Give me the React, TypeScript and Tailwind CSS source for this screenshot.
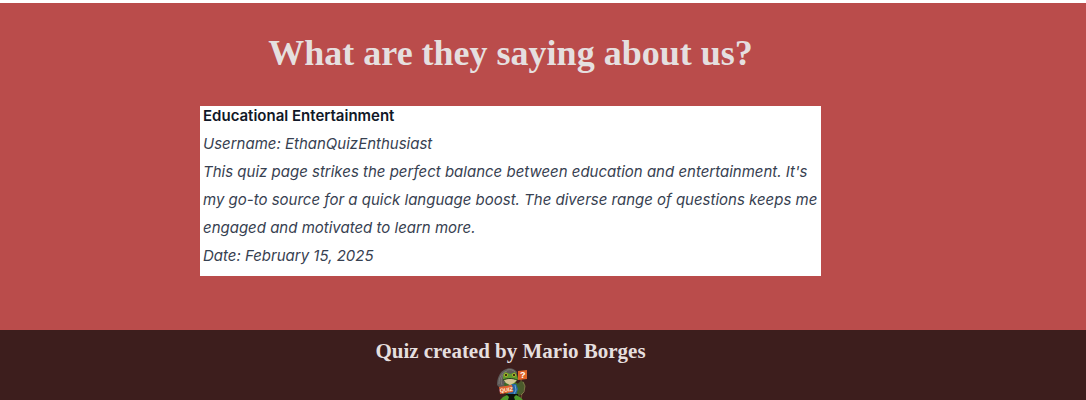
function FrogLogo() {
  return (
    <svg viewBox="0 0 32 32" className="block h-8 w-8" role="img" aria-label="Quiz frog mascot">
      <path d="M2 17C2 11 4 5 9 2c5-3 10-2 13 2l-2 12-5 5H6z" fill="#5d5a58" />
      <path d="M4 16C4 10 6 5 12 3M7 17C5 12 7 7 10 5M12 2c4-1 6 0 8 2" fill="none" stroke="#85817d" strokeWidth="0.8" />
      <path d="M26 11l1 12-1 9" fill="none" stroke="#6b4a2c" strokeWidth="1.4" />
      <path d="M21 17l5-4 3 1 1 5-2 6-4 3-4-2z" fill="#4b5a2c" />
      <path d="M28 14l2 4-1 6-3 3" fill="none" stroke="#8b8450" strokeWidth="0.8" />
      <path d="M9 15h13l3 5-2 7H11z" fill="#3d6a27" />
      <path d="M14 16h7l2 5-2 6h-8z" fill="#2864a0" />
      <path d="M20 17l1 5-2 4" fill="none" stroke="#64a7d2" />
      <path d="M11 26h12l1 6H10z" fill="#0d120a" />
      <path d="M5 32l3-3 4-2 2 2-1 3zM28 32l-3-3-4-2-2 2 1 3z" fill="#4d9a2a" />
      <path d="M8 11l0-4 2-3 3 1 2 1 3-1 2-1 2 3 1 4-3 4-5 2-4-2z" fill="#5f9a2d" />
      <path d="M9 12l6-2 7 2-3 3-4 2-4-2z" fill="#d5c694" />
      <path d="M8 12c4-2 10-2 14 0" fill="none" stroke="#25371a" strokeWidth="1" />
      <circle cx="11" cy="7" r="1.8" fill="#d7b52d" />
      <circle cx="19" cy="7" r="1.8" fill="#d7b52d" />
      <circle cx="11" cy="7" r="1.1" fill="#15180e" />
      <circle cx="19" cy="7" r="1.1" fill="#15180e" />
      <path d="M23 3l9-1v9l-9 1z" fill="#e06428" />
      <path d="M4 19l13-2 1 7-13 2z" fill="#df6230" />
      <text x="5" y="24.5" transform="rotate(-7 5 24.5)" fill="#fff2df" fontSize="5.5" fontWeight="700" fontFamily="Liberation Sans, sans-serif">QUIZ</text>
      <text x="25" y="10" fill="#fff" fontSize="9" fontWeight="700" fontFamily="Liberation Sans, sans-serif">?</text>
    </svg>
  );
}

export default function App() {
  return (
    <div className="min-h-screen bg-white pt-[3px] font-['Liberation_Serif',serif] text-[#e5dfdf]">
      <main className="bg-[#ba4c4b] pt-6 pr-[65px] pb-[54px]">
        <h1 className="text-center text-4xl leading-[52px] font-bold">What are they saying about us?</h1>
        <article className="mx-auto mt-[27px] flow-root w-full max-w-[621px] bg-white pb-1.5 pl-[3px] font-[Inter,sans-serif] text-[15px] leading-7 text-[#374151]">
          <h2 className="-mt-1 font-semibold text-[#111827]">Educational Entertainment</h2>
          <p className="italic">Username: EthanQuizEnthusiast</p>
          <p className="italic">
            This quiz page strikes the perfect balance between education and entertainment. It's my go-to source for a
            quick language boost. The diverse range of questions keeps me engaged and motivated to learn more.
          </p>
          <p className="italic">Date: February 15, 2025</p>
        </article>
      </main>
      <footer className="h-[70px] overflow-hidden bg-[#3d1e1d] pt-1 pr-[65px]">
        <p className="text-center text-[21px] leading-[34px] font-bold">Quiz created by Mario Borges</p>
        <div className="flex justify-center">
          <FrogLogo />
        </div>
      </footer>
    </div>
  );
}
